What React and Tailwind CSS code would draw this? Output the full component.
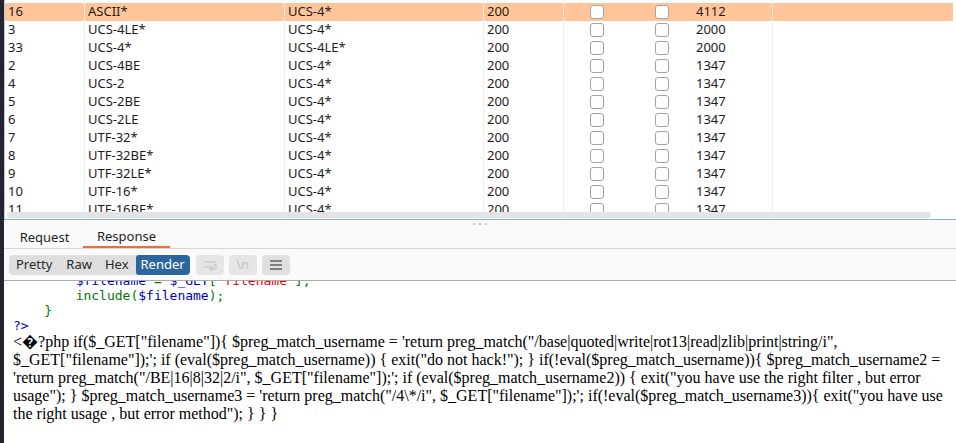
import React from "react";

const rows = [
  ["16", "ASCII*", "UCS-4*", "200", "4112", true],
  ["3", "UCS-4LE*", "UCS-4*", "200", "2000"],
  ["33", "UCS-4*", "UCS-4LE*", "200", "2000"],
  ["2", "UCS-4BE", "UCS-4*", "200", "1347"],
  ["4", "UCS-2", "UCS-4*", "200", "1347"],
  ["5", "UCS-2BE", "UCS-4*", "200", "1347"],
  ["6", "UCS-2LE", "UCS-4*", "200", "1347"],
  ["7", "UTF-32*", "UCS-4*", "200", "1347"],
  ["8", "UTF-32BE*", "UCS-4*", "200", "1347"],
  ["9", "UTF-32LE*", "UCS-4*", "200", "1347"],
  ["10", "UTF-16*", "UCS-4*", "200", "1347"],
  ["11", "UTF-16BE*", "UCS-4*", "200", "1347"],
];

function Check() {
  return <div className="w-[14px] h-[14px] border border-[#a3a3a3] rounded-[3px] bg-white" />;
}

function Row({ r, blank }) {
  const hl = r && r[5];
  return (
    <div className={`flex h-[18px] items-center ${hl ? "bg-[#ffc598]" : ""}`}>
      <div className="w-[80px] h-full border-r border-[#ededed] pl-[3px] flex items-center">{r && r[0]}</div>
      <div className="w-[200px] h-full border-r border-[#ededed] pl-[3px] flex items-center">{r && r[1]}</div>
      <div className="w-[199px] h-full border-r border-[#ededed] pl-[3px] flex items-center">{r && r[2]}</div>
      <div className="w-[80px] h-full border-r border-[#ededed] pl-[3px] flex items-center">{r && r[3]}</div>
      <div className="w-[66px] h-full flex items-center justify-center">{!blank && <Check />}</div>
      <div className="w-[63px] h-full flex items-center justify-center">{!blank && <Check />}</div>
      <div className="w-[80px] h-full border-r border-[#ededed] pl-[3px] flex items-center">{r && r[4]}</div>
      <div className="flex-1 h-full" />
    </div>
  );
}

const G = ({ children }) => <span className="text-[#007700]">{children}</span>;
const B = ({ children }) => <span className="text-[#0000BB]">{children}</span>;
const R = ({ children }) => <span className="text-[#DD0000]">{children}</span>;

export default function App() {
  return (
    <div className="w-[956px] h-[443px] overflow-hidden flex bg-[#24242e]" style={{ fontFamily: '"Noto Sans", sans-serif' }}>
      <div className="w-[4px] shrink-0 bg-[#24242e]" />
      <div className="flex-1 flex flex-col bg-white min-w-0">
        {/* table */}
        <div className="relative h-[219px] overflow-hidden border-l border-[#b7c9de] w-[949px] text-[13px] text-[#1c1c1c]">
          <div className="-mt-[15px]">
            <Row blank />
            {rows.map((r, i) => (
              <Row key={i} r={r} />
            ))}
          </div>
          <div className="absolute left-[2px] top-[212px] w-[924px] h-[6px] rounded-full bg-[#e4e4e4]" />
        </div>
        <div className="h-[1px] bg-[#8eaccb]" />
        <div className="bg-[#fafafa] flex flex-col">
          <div className="h-[7px] flex items-center justify-center gap-[4px]">
            <div className="w-[2px] h-[2px] rounded-full bg-[#b0b0b0]" />
            <div className="w-[2px] h-[2px] rounded-full bg-[#b0b0b0]" />
            <div className="w-[2px] h-[2px] rounded-full bg-[#b0b0b0]" />
          </div>
          <div className="h-[22px] flex border-b border-[#d6d6d6] text-[13px] text-[#1e1e1e] pl-[2px]">
            <div className="w-[77px] flex items-center justify-center pt-[1px]">Request</div>
            <div className="w-[87px] flex items-center justify-center pt-[1px] border-b-2 border-[#f26b3a]">Response</div>
          </div>
          <div className="h-[31px] flex items-center pl-[5px] gap-[5px] text-[13px] text-[#2a2a2a]">
            <div className="flex h-[20px] rounded-[4px] bg-[#dedede] overflow-hidden">
              <div className="px-[7px] flex items-center">Pretty</div>
              <div className="px-[7px] flex items-center">Raw</div>
              <div className="pl-[6px] pr-[7px] flex items-center">Hex</div>
              <div className="px-[5px] flex items-center bg-[#2d669d] text-white rounded-[3px]">Render</div>
            </div>
            <div className="w-[28px] h-[20px] rounded-[4px] bg-[#e6e6e6] flex items-center justify-center ml-[1px]">
              <svg width="16" height="12" viewBox="0 0 16 12" fill="none" stroke="#c9c9c9" strokeWidth="1.3">
                <path d="M2 3 H14" />
                <path d="M2 8 H12" />
                <path d="M12 5.5 a2.2 2.2 0 0 1 0 4.5 H8" />
                <path d="M9.5 8.5 L8 10 L9.5 11.5" />
              </svg>
            </div>
            <div className="w-[28px] h-[20px] rounded-[4px] bg-[#e6e6e6] flex items-center justify-center text-[#c4c4c4] text-[13px]">\n</div>
            <div className="w-[28px] h-[20px] rounded-[4px] bg-[#e0e0e0] flex items-center justify-center">
              <svg width="14" height="12" viewBox="0 0 14 12" fill="none" stroke="#555" strokeWidth="1.4">
                <path d="M1 2 H13" />
                <path d="M1 6 H13" />
                <path d="M1 10 H13" />
              </svg>
            </div>
          </div>
        </div>
        <div className="flex-1 border-t border-[#a9a9a9] bg-white overflow-hidden pl-[9px] pr-[6px]">
          <div className="-mt-[8px] text-[13px] leading-[15px] whitespace-pre" style={{ fontFamily: '"DejaVu Sans Mono", monospace' }}>
            <div>
              {"        "}<B>$filename</B> <G>=</G> <B>$_GET</B><G>[</G><R>'filename'</R><G>];</G>
            </div>
            <div>
              {"        "}<G>include(</G><B>$filename</B><G>);</G>
            </div>
            <div>
              {"    "}<G>{"}"}</G>
            </div>
            <div>
              <B>?&gt;</B>
            </div>
          </div>
          <div className="w-[935px] text-[16px] leading-[18px] text-black" style={{ fontFamily: '"Liberation Serif", serif' }}>
            {"<\uFFFD?php if($_GET[\"filename\"]){ $preg_match_username = 'return preg_match(\"/base|quoted|write|rot13|read|zlib|print|string/i\", $_GET[\"filename\"]);'; if (eval($preg_match_username)) { exit(\"do not hack!\"); } if(!eval($preg_match_username)){ $preg_match_username2 = 'return preg_match(\"/BE|16|8|32|2/i\", $_GET[\"filename\"]);'; if (eval($preg_match_username2)) { exit(\"you have use the right filter , but error usage\"); } $preg_match_username3 = 'return preg_match(\"/4\\*/i\", $_GET[\"filename\"]);'; if(!eval($preg_match_username3)){ exit(\"you have use the right usage , but error method\"); } } }"}
          </div>
        </div>
      </div>
    </div>
  );
}
